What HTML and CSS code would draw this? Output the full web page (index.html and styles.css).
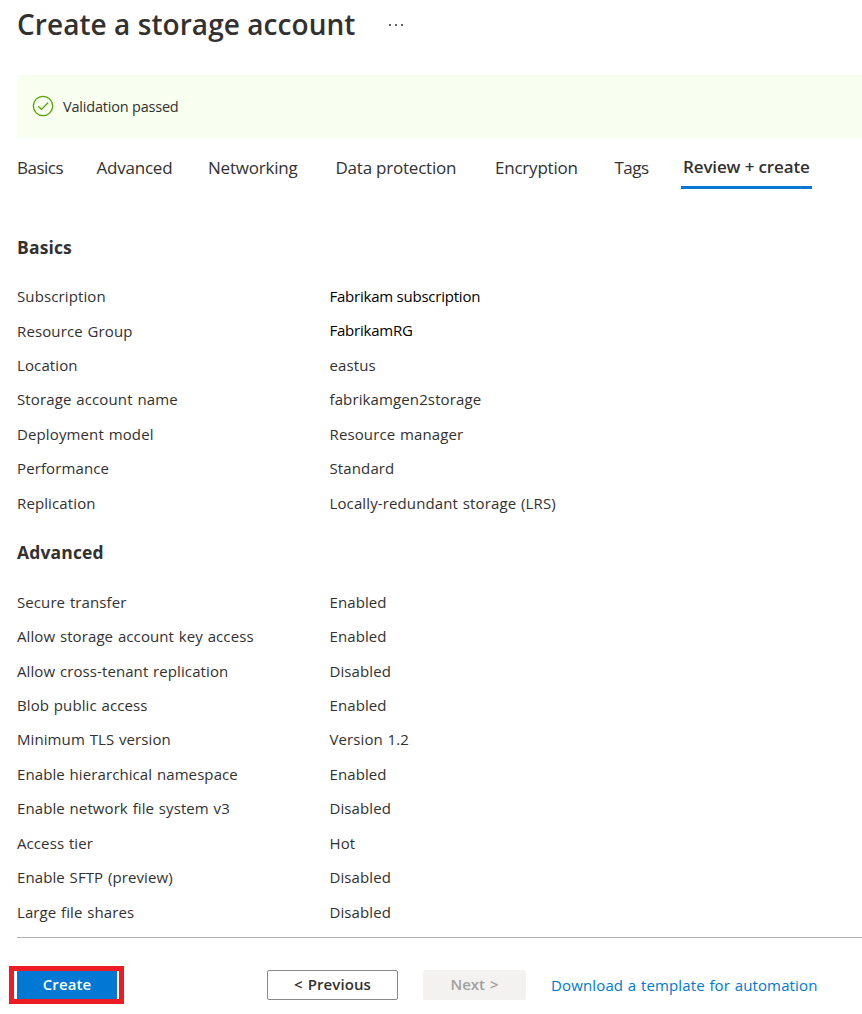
FILE: index.html
```
<!DOCTYPE html>
<html lang="en">
<head>
<meta charset="utf-8">
<title>Create a storage account</title>
<link rel="stylesheet" href="styles.css">
</head>
<body>
<main class="page">
  <header class="header"><h1 class="title">Create a storage account</h1>
    <svg class="more" viewBox="0 0 16 4"><circle cx="2" cy="2" r="1"/><circle cx="8" cy="2" r="1"/><circle cx="14" cy="2" r="1"/></svg>
  </header>
  <div class="banner">
    <svg class="check" viewBox="0 0 22 22"><circle cx="11" cy="11" r="9.7"/><path d="M6.2 11.2l3.3 3.2 6.5-6.6"/></svg>
    <span>Validation passed</span>
  </div>
  <nav class="tabs">
    <a class="tab tab-short">Basics</a><a class="tab">Advanced</a><a class="tab">Networking</a><a class="tab">Data protection</a><a class="tab">Encryption</a><a class="tab tab-short">Tags</a><a class="tab tab-active">Review + create</a>
  </nav>
  <section class="section">
    <h2 class="section-title">Basics</h2>
    <dl class="rows">
      <div class="row"><dt>Subscription</dt><dd class="custom">Fabrikam subscription</dd></div>
      <div class="row"><dt>Resource Group</dt><dd class="custom custom-group">FabrikamRG</dd></div>
      <div class="row"><dt>Location</dt><dd>eastus</dd></div>
      <div class="row"><dt>Storage account name</dt><dd>fabrikamgen2storage</dd></div>
      <div class="row"><dt>Deployment model</dt><dd>Resource manager</dd></div>
      <div class="row"><dt>Performance</dt><dd>Standard</dd></div>
      <div class="row"><dt>Replication</dt><dd>Locally-redundant storage (LRS)</dd></div>
    </dl>
  </section>
  <section class="section section-last">
    <h2 class="section-title">Advanced</h2>
    <dl class="rows">
      <div class="row"><dt>Secure transfer</dt><dd>Enabled</dd></div>
      <div class="row"><dt>Allow storage account key access</dt><dd>Enabled</dd></div>
      <div class="row"><dt>Allow cross-tenant replication</dt><dd>Disabled</dd></div>
      <div class="row"><dt>Blob public access</dt><dd>Enabled</dd></div>
      <div class="row"><dt>Minimum TLS version</dt><dd>Version 1.2</dd></div>
      <div class="row"><dt>Enable hierarchical namespace</dt><dd>Enabled</dd></div>
      <div class="row"><dt>Enable network file system v3</dt><dd>Disabled</dd></div>
      <div class="row"><dt>Access tier</dt><dd>Hot</dd></div>
      <div class="row"><dt>Enable SFTP (preview)</dt><dd>Disabled</dd></div>
      <div class="row"><dt>Large file shares</dt><dd>Disabled</dd></div>
    </dl>
  </section>
  <footer class="footer">
    <div class="highlight"><button class="btn btn-primary">Create</button></div>
    <button class="btn btn-previous">&lt; Previous</button>
    <button class="btn btn-next" disabled>Next &gt;</button>
    <a class="link">Download a template for automation</a>
  </footer>
</main>
</body>
</html>
```
FILE: styles.css
```
* { box-sizing: border-box; }
body { margin: 0; background: #fff; color: #323130; font: 15px/20px "Open Sans", "Noto Sans", sans-serif; overflow: hidden; }
.page { width: 862px; height: 1014px; padding-left: 17px; display: flex; flex-direction: column; }
.header { height: 75px; display: flex; align-items: flex-start; gap: 33px; }
.title { margin: 4px 0 0; font-size: 28px; line-height: 40px; font-weight: 600; width: 338px; white-space: nowrap; letter-spacing: .06px; }
.more { width: 16px; height: 4px; margin-top: 23px; fill: #323130; }
.banner { height: 63px; background: #f8fff0; display: flex; align-items: center; padding-left: 15px; gap: 9px; font-size: 14.5px; letter-spacing: -.2px; }
.check { width: 22px; height: 22px; margin-top: -1px; fill: none; stroke: #57a300; stroke-width: 1.3; }
.tabs { height: 71px; padding-top: 17px; display: grid; grid-template-columns: 79.5px 111.5px 127.5px 159.5px 119.5px 66.5px 131px; align-items: start; font-size: 17px; line-height: 26px; letter-spacing: -.22px; white-space: nowrap; }
.tab-short { letter-spacing: -.5px; }
.tab-active { font-weight: 600; height: 34px; line-height: 24px; padding-left: 2px; border-bottom: 3px solid #0078d4; letter-spacing: -.13px; }
.section-title { margin: 0; font-size: 17.5px; line-height: 24px; font-weight: 700; letter-spacing: .15px; }
.section { padding-top: 26px; height: 305.6px; }
.rows { margin: 20px 0 0; letter-spacing: .12px; word-spacing: .8px; }
.row { display: grid; grid-template-columns: 312.5px 1fr; height: 34.43px; align-items: center; white-space: nowrap; }
.row dd { margin: 0; }
.row .custom { color: #000; letter-spacing: -.23px; word-spacing: 0; }
.row .custom-group { padding-bottom: 2px; }
.section-last { padding-top: 25px; height: 423.4px; border-bottom: 1px solid #b3b0ad; }
.section-last .rows { margin-top: 21px; letter-spacing: .09px; }
.footer { display: flex; padding-top: 28px; margin-left: -8px; }
.highlight { width: 115px; height: 38px; border: 5px solid #ed1c24; padding: 0 2px 0 3px; }
.btn { font: 600 15px/20px "Open Sans", sans-serif; border-radius: 2px; padding: 0 0 2px; height: 30px; color: #323130; letter-spacing: .1px; word-spacing: 1px; }
.btn-primary { width: 100%; height: 28px; background: #0078d4; color: #fff; border: 0; border-radius: 0; display: block; }
.btn-previous { width: 131px; margin: 4px 25px 0 143px; background: #fff; border: 1px solid #8a8886; }
.btn-next { width: 103px; margin: 4px 26px 0 0; background: #f3f2f1; color: #a19f9d; border: 0; letter-spacing: 0; }
.link { color: #0078d4; margin: 9px 0 0 -1px; white-space: nowrap; letter-spacing: .14px; word-spacing: .6px; }
```
